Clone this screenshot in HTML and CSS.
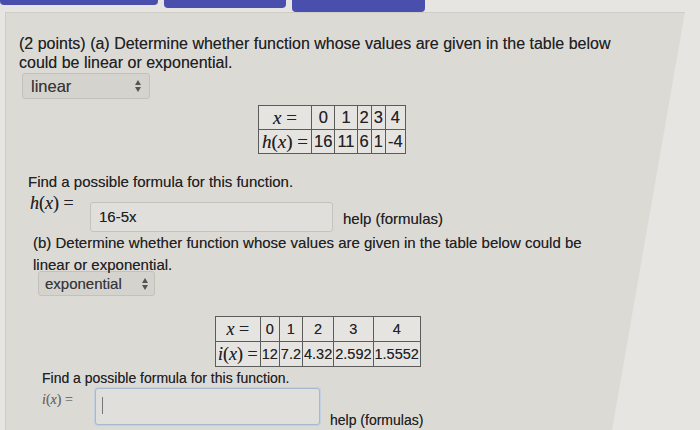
FILE: index.html
```html
<!DOCTYPE html>
<html>
<head>
<meta charset="utf-8">
<link rel="stylesheet" href="styles.css">
</head>
<body>
<div class="tabs">
  <div class="tab t1"></div>
  <div class="tab t2"></div>
  <div class="tab t3"></div>
</div>
<div class="panel">
  <div class="part-a">
    <p class="q">(2 points) (a) Determine whether function whose values are given in the table below could be linear or exponential.</p>
    <div class="select sel-a"><span>linear</span><span class="arrows"><i class="up"></i><i class="down"></i></span></div>
    <table class="tbl tbl-a">
      <tr><td class="m"><i>x</i> =</td><td>0</td><td>1</td><td>2</td><td>3</td><td>4</td></tr>
      <tr><td class="m"><i>h</i>(<i>x</i>) =</td><td>16</td><td>11</td><td>6</td><td>1</td><td>-4</td></tr>
    </table>
    <p class="find fa">Find a possible formula for this function.</p>
    <div class="ans ans-a">
      <span class="m lbl"><i>h</i>(<i>x</i>) =</span>
      <div class="inp inp-a">16-5x</div>
      <span class="help">help (formulas)</span>
    </div>
  </div>
  <div class="part-b">
    <p class="qb">(b) Determine whether function whose values are given in the table below could be linear or exponential.</p>
    <div class="select sel-b"><span>exponential</span><span class="arrows"><i class="up"></i><i class="down"></i></span></div>
    <table class="tbl tbl-b">
      <tr><td class="m"><i>x</i> =</td><td>0</td><td>1</td><td>2</td><td>3</td><td>4</td></tr>
      <tr><td class="m"><i>i</i>(<i>x</i>) =</td><td>12</td><td>7.2</td><td>4.32</td><td>2.592</td><td>1.5552</td></tr>
    </table>
    <p class="find fb">Find a possible formula for this function.</p>
    <div class="ans ans-b">
      <span class="m lbl lbl-b"><i>i</i>(<i>x</i>) =</span>
      <div class="inp inp-b"><span class="caret"></span></div>
      <span class="help help-b">help (formulas)</span>
    </div>
  </div>
</div>
</body>
</html>
```
FILE: styles.css
```css
html, body {
  margin: 0;
  padding: 0;
}
body {
  width: 700px;
  height: 430px;
  overflow: hidden;
  background: #e7e5e1;
  font-family: "Liberation Sans", Arial, sans-serif;
  color: #222224;
  text-shadow: 0 0 0.6px rgba(0, 0, 0, 0.45);
}
.tabs {
  display: flex;
  gap: 6px;
  height: 12px;
  align-items: flex-start;
}
.tab {
  background: #4a4fae;
  border-radius: 0 0 4px 4px;
}
.t1 { width: 158px; height: 5px; }
.t2 { width: 122px; height: 8px; }
.t3 { width: 133px; height: 12px; }
.panel {
  margin: 0 0 0 5px;
  width: 680px;
  height: 418px;
  background: #dcdad5;
  border-top: 1px solid #cfcdc8;
  border-left: 1px solid #cfcdc8;
  box-sizing: border-box;
  clip-path: polygon(0 0, 100% 0, calc(100% - 73px) 100%, 0 100%);
}
p { margin: 0; }
.part-a {
  padding: 21px 0 0 13px;
}
.q {
  font-size: 16px;
  line-height: 19px;
  width: 630px;
}
.select {
  display: flex;
  align-items: center;
  justify-content: space-between;
  background: #d5d3ce;
  border: 1px solid #c3c1bc;
  border-radius: 3px;
  box-sizing: border-box;
  color: #38383a;
}
.sel-a {
  margin: 1px 0 0 3px;
  width: 128px;
  height: 26px;
  font-size: 16.5px;
  padding: 0 8px 0 8px;
}
.arrows {
  display: flex;
  flex-direction: column;
  gap: 2px;
}
.arrows i {
  display: block;
  width: 0;
  height: 0;
  border-left: 3.5px solid transparent;
  border-right: 3.5px solid transparent;
}
.arrows .up { border-bottom: 5px solid #555; }
.arrows .down { border-top: 5px solid #555; }
.tbl {
  border-collapse: collapse;
  background: #e6e4e0;
}
.tbl td {
  border: 1px solid #5b5b5b;
  text-align: center;
  padding: 0 2px;
}
.tbl .m {
  font-family: "Liberation Serif", "Times New Roman", serif;
  white-space: nowrap;
}
.tbl-a {
  margin: 6px 0 0 239px;
  font-size: 16.5px;
}
.tbl-a td { height: 23px; }
.tbl-a .m { font-size: 19px; padding: 0 3px; }
.find {
  font-size: 15px;
  line-height: 17px;
}
.fa {
  margin: 19px 0 0 9px;
}
.ans {
  display: flex;
  align-items: flex-start;
}
.m {
  font-family: "Liberation Serif", "Times New Roman", serif;
}
.ans-a {
  margin-top: 3px;
}
.lbl {
  font-size: 18px;
  line-height: 20px;
  width: 71px;
  flex-shrink: 0;
  white-space: nowrap;
  padding: 0 0 0 11px;
  box-sizing: border-box;
}
.inp {
  background: #e1dfdb;
  border: 1px solid #c5c3be;
  border-radius: 3px;
  box-sizing: border-box;
  flex-shrink: 0;
}
.inp-a {
  width: 243px;
  height: 30px;
  margin-top: 9px;
  font-size: 15px;
  padding: 5px 8px;
}
.help {
  font-size: 15px;
  margin: 17px 0 0 10px;
  white-space: nowrap;
}
.part-b {
  padding: 0 0 0 27px;
}
.qb {
  font-size: 15px;
  line-height: 22px;
  width: 560px;
}
.sel-b {
  margin: -5px 0 0 5px;
  width: 117px;
  height: 25px;
  font-size: 15px;
  padding: 0 6px;
}
.tbl-b {
  margin: 20px 0 0 182px;
  font-size: 14.5px;
}
.tbl-b td { height: 24px; padding: 0 1px; }
.tbl-b .m { font-size: 18px; padding: 0 2px; }
.fb {
  font-size: 14px;
  line-height: 16px;
  margin: 3px 0 0 9px;
}
.ans-b {
  margin-top: 2px;
}
.lbl-b {
  font-size: 14px;
  line-height: 18px;
  width: 62px;
  padding-left: 9px;
  margin-top: 3px;
  color: #6d6d70;
}
.inp-b {
  width: 225px;
  height: 37px;
  padding: 8px 6px;
  border-color: #a8b9cf;
  box-shadow: 0 0 0 1px #c3d1e2;
}
.caret {
  display: block;
  width: 1px;
  height: 17px;
  background: #777;
}
.help-b {
  font-size: 14px;
  margin: 24px 0 0 10px;
}
```
